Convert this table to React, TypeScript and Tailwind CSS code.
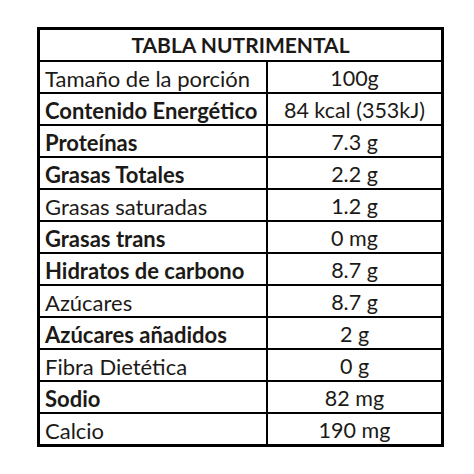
const rows: [string, string, boolean][] = [
  ["Tamaño de la porción", "100g", false],
  ["Contenido Energético", "84 kcal (353kJ)", true],
  ["Proteínas", "7.3 g", true],
  ["Grasas Totales", "2.2 g", true],
  ["Grasas saturadas", "1.2 g", false],
  ["Grasas trans", "0 mg", true],
  ["Hidratos de carbono", "8.7 g", true],
  ["Azúcares", "8.7 g", false],
  ["Azúcares añadidos", "2 g", true],
  ["Fibra Dietética", "0 g", false],
  ["Sodio", "82 mg", true],
  ["Calcio", "190 mg", false],
];

export default function App() {
  return (
    <div className="w-[474px] h-[474px] bg-white pt-[27px] pl-[37px] font-['Lato','Open_Sans',sans-serif] text-[#1c1a17]">
      <div className="w-[407px] border-[3px] border-black">
        <div className="h-[30px] flex items-center justify-center text-[21px] font-bold">TABLA NUTRIMENTAL</div>
        {rows.map(([label, value, bold]) => (
          <div key={label} className="grid grid-cols-[226px_1fr] h-[32px] border-t-2 border-black">
            <div className={`flex items-center pl-[5px] text-[22px] ${bold ? "font-bold" : ""}`}>{label}</div>
            <div className="flex items-center justify-center border-l-2 border-black text-[21.5px]">{value}</div>
          </div>
        ))}
      </div>
    </div>
  );
}
